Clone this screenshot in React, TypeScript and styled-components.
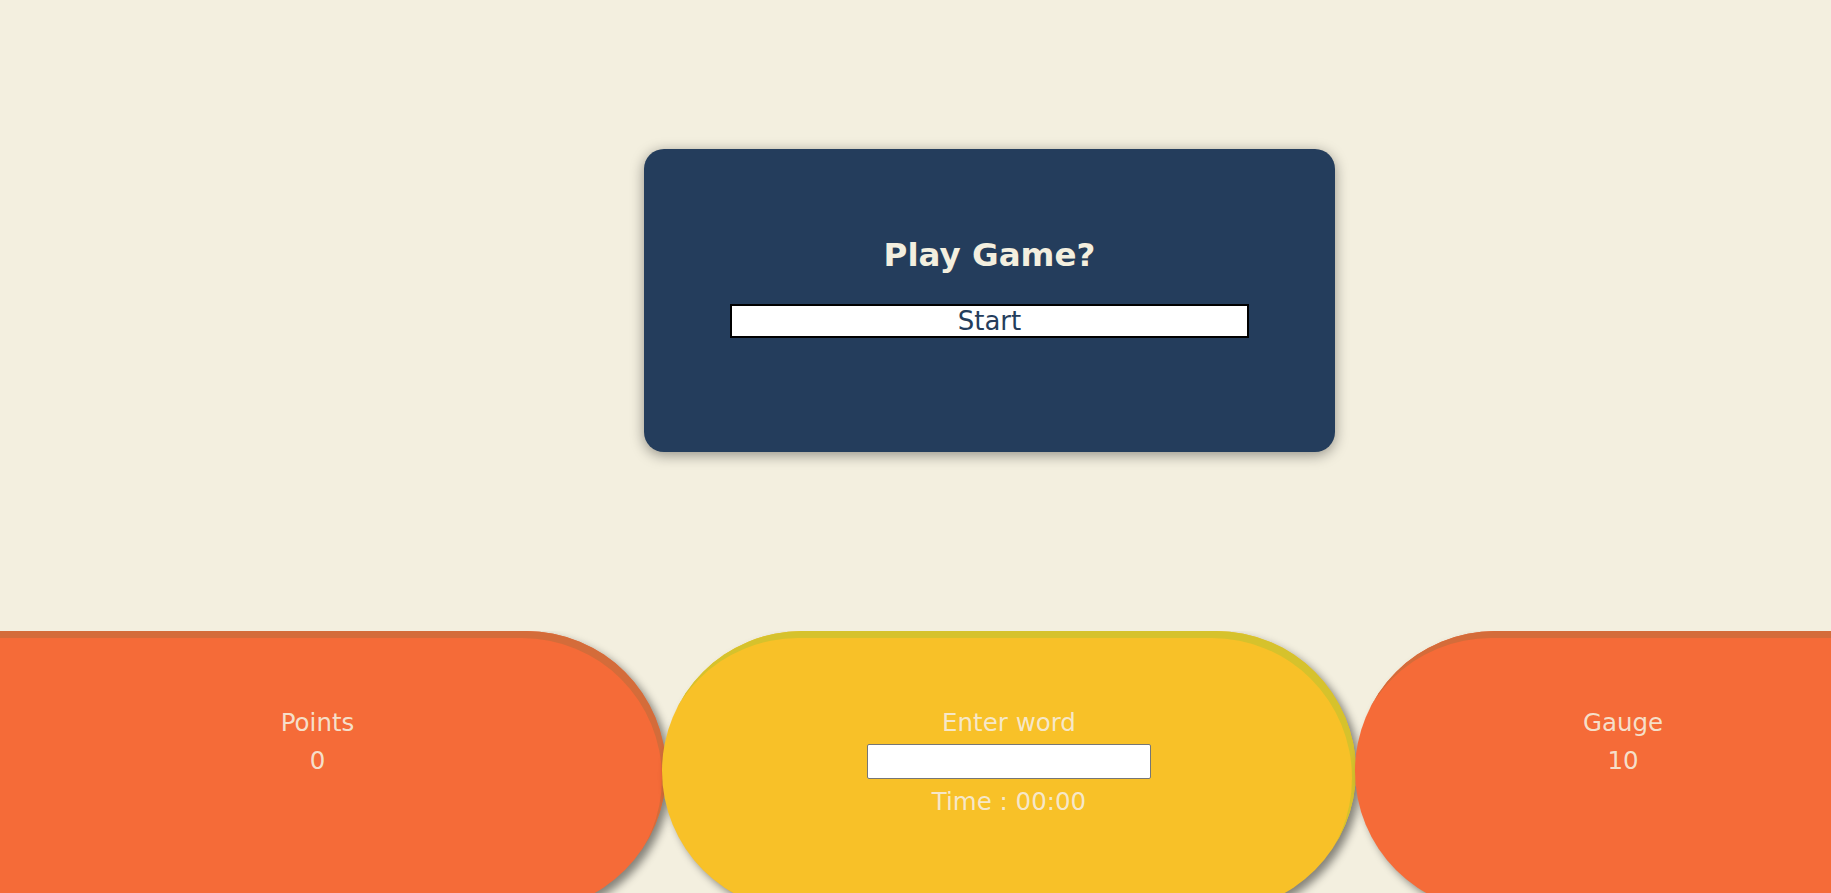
import React from "react";
import styled, { createGlobalStyle } from "styled-components";

const GlobalStyle = createGlobalStyle`
  html, body {
    margin: 0;
    padding: 0;
    height: 100%;
    overflow: hidden;
    background: #f3efdf;
    font-family: "DejaVu Sans", Verdana, sans-serif;
  }
  #root { height: 100%; }
`;

const Page = styled.main`
  height: 100%;
  display: flex;
  flex-direction: column;
  overflow: hidden;
`;

const Stage = styled.section`
  display: flex;
  padding: 149px 0 0 644px;
`;

const Card = styled.div`
  box-sizing: border-box;
  width: 691px;
  height: 303px;
  background: #243d5c;
  border-radius: 20px;
  box-shadow: 0 3px 14px rgba(0, 0, 0, 0.4);
  display: flex;
  flex-direction: column;
  align-items: center;
  padding-top: 87px;
`;

const Title = styled.h1`
  margin: 0;
  font-size: 32.5px;
  font-weight: bold;
  line-height: normal;
  color: #f3efdf;
`;

const StartButton = styled.button`
  margin-top: 30px;
  width: 75%;
  height: 34px;
  box-sizing: border-box;
  background: #ffffff;
  border: 2px solid #000000;
  border-radius: 0;
  padding: 0;
  font-family: "DejaVu Sans", Verdana, sans-serif;
  font-size: 26px;
  line-height: 1;
  color: #243d5c;
  cursor: pointer;
`;

const Dock = styled.section`
  display: flex;
  margin-top: 179px;
  height: 280px;
  overflow: hidden;
  flex-shrink: 0;
`;

type PillProps = { $bg: string; $band: string; $w: number; $ml: number; $radius: string };

const Pill = styled.div<PillProps>`
  flex: 0 0 ${(p) => p.$w}px;
  margin-left: ${(p) => p.$ml}px;
  height: 280px;
  box-sizing: border-box;
  border-radius: ${(p) => p.$radius};
  background: ${(p) => p.$bg};
  box-shadow: inset -4px 7px 0 ${(p) => p.$band}, 5px 5px 8px rgba(0, 0, 0, 0.45);
  display: flex;
  flex-direction: column;
  align-items: center;
  padding-top: 72.5px;
  color: rgba(246, 236, 218, 0.92);
  font-size: 24.5px;
`;

const Line = styled.div`
  line-height: 38.4px;
  height: 38.4px;
`;

const WordInput = styled.input`
  box-sizing: border-box;
  width: 284px;
  height: 35px;
  margin: 2px 0 4px;
  background: #ffffff;
  border: 1px solid #767676;
  border-radius: 2px;
  padding: 0 4px;
  font-family: "DejaVu Sans", Verdana, sans-serif;
  font-size: 18px;
`;

export default function App() {
  return (
    <>
      <GlobalStyle />
      <Page>
        <Stage>
          <Card>
            <Title>Play Game?</Title>
            <StartButton>Start</StartButton>
          </Card>
        </Stage>
        <Dock>
          <Pill $bg="#f56b38" $band="#d46c3a" $w={697} $ml={-31} $radius="0 140px 140px 0">
            <Line>Points</Line>
            <Line>0</Line>
          </Pill>
          <Pill $bg="#f8c128" $band="#d6c22c" $w={694} $ml={-4} $radius="140px">
            <Line>Enter word</Line>
            <WordInput type="text" />
            <Line>Time : 00:00</Line>
          </Pill>
          <Pill $bg="#f56b38" $band="#d46c3a" $w={536} $ml={-1} $radius="140px 0 0 140px">
            <Line>Gauge</Line>
            <Line>10</Line>
          </Pill>
        </Dock>
      </Page>
    </>
  );
}
